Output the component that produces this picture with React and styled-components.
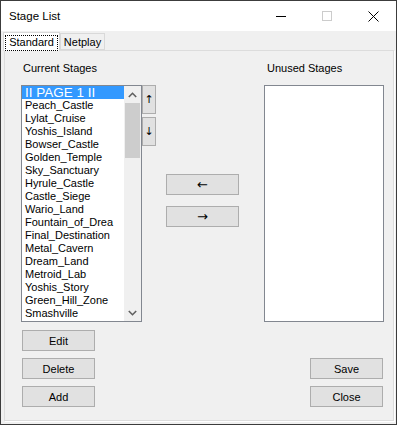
import React from 'react';
import styled, { createGlobalStyle } from 'styled-components';

const Global = createGlobalStyle`
  html, body { margin: 0; padding: 0; background: #ffffff; }
  body { font-family: "Liberation Sans", Arial, sans-serif; }
  * { box-sizing: border-box; }
`;

const Window = styled.div`
  width: 397px;
  height: 425px;
  border: 1px solid #3c3c3c;
  background: #f0f0f0;
  display: flex;
  flex-direction: column;
  overflow: hidden;
`;

const TitleBar = styled.div`
  height: 30px;
  flex: none;
  background: #ffffff;
  display: flex;
  align-items: center;
`;

const Title = styled.div`
  flex: 1;
  padding-left: 8px;
  font-size: 11.5px;
  color: #000;
  line-height: 30px;
`;

const CaptionButton = styled.div`
  width: 46px;
  height: 30px;
  display: flex;
  align-items: center;
  justify-content: center;
`;

const Client = styled.div`
  flex: 1;
  display: flex;
  flex-direction: column;
  padding-left: 2px;
`;

const TabStrip = styled.div`
  height: 19px;
  display: flex;
  align-items: flex-end;
  position: relative;
  z-index: 1;
`;

const Tab = styled.div`
  width: ${p => p.$w}px;
  height: ${p => (p.$active ? 19 : 17)}px;
  margin-bottom: ${p => (p.$active ? -1 : 0)}px;
  border: 1px solid #d9d9d9;
  border-bottom: ${p => (p.$active ? 'none' : '1px solid #d9d9d9')};
  background: ${p => (p.$active ? '#ffffff' : '#f0f0f0')};
  font-size: 11px;
  color: #000;
  display: flex;
  align-items: center;
  justify-content: center;
  padding: ${p => (p.$active ? '1px 1px 0' : '0')};
`;

const FocusLabel = styled.div`
  width: 100%;
  height: 16px;
  border: 1px dotted #000;
  display: flex;
  align-items: center;
  justify-content: center;
  line-height: 13px;
`;

const Panel = styled.div`
  margin-left: 1px;
  width: 390px;
  height: 371px;
  border: 1px solid #dcdcdc;
  box-shadow: 1px 1px 0 #ffffff;
  background: #f0f0f0;
  padding: 11px 0 0 16px;
  display: flex;
  flex-direction: column;
`;

const TopSection = styled.div`
  display: flex;
  align-items: flex-start;
`;

const Group = styled.div`
  display: flex;
  flex-direction: column;
  margin-left: ${p => p.$ml || 0}px;
  margin-top: ${p => p.$mt || 0}px;
  gap: ${p => p.$gap || 0}px;
`;

const Label = styled.div`
  height: 13px;
  line-height: 13px;
  font-size: 11px;
  color: #000;
  padding-left: ${p => p.$indent}px;
  margin-bottom: 10px;
  white-space: nowrap;
`;

const ListRow = styled.div`
  display: flex;
  align-items: flex-start;
`;

const ListBox = styled.div`
  width: ${p => p.$w}px;
  height: 237px;
  border: 1px solid #828790;
  background: #ffffff;
  display: flex;
`;

const Items = styled.div`
  flex: 1;
  min-width: 0;
  display: flex;
  flex-direction: column;
  overflow: hidden;
`;

const Item = styled.div`
  height: 13px;
  line-height: ${p => (p.$selected ? '13px' : '13px')};
  padding-left: 3px;
  font-size: ${p => (p.$selected ? '13.5px' : '11px')};
  white-space: nowrap;
  overflow: hidden;
  color: ${p => (p.$selected ? '#ffffff' : '#000000')};
  background: ${p => (p.$selected ? '#3399ff' : 'transparent')};
`;

const ScrollBar = styled.div`
  width: 17px;
  flex: none;
  background: #f0f0f0;
  display: flex;
  flex-direction: column;
`;

const ScrollArrow = styled.div`
  height: 17px;
  flex: none;
  display: flex;
  align-items: center;
  justify-content: center;
`;

const Track = styled.div`
  flex: 1;
  padding: 0 1px;
`;

const Thumb = styled.div`
  height: 55px;
  background: #cdcdcd;
`;

const Button = styled.div`
  width: ${p => p.$w || 73}px;
  height: ${p => p.$h || 21}px;
  background: #e1e1e1;
  border: 1px solid #adadad;
  display: flex;
  align-items: center;
  justify-content: center;
  font-size: 11px;
  color: #000;
  white-space: nowrap;
  grid-column: ${p => p.$col || 'auto'};
  grid-row: ${p => p.$row || 'auto'};
`;

const ArrowGlyph = styled.span`
  font-family: "DejaVu Sans", "Liberation Sans", sans-serif;
  font-size: ${p => p.$size || 12}px;
  line-height: 1;
  color: #000;
`;

const ButtonGrid = styled.div`
  margin-top: 8px;
  margin-left: 1px;
  display: grid;
  grid-template-columns: 73px 73px;
  column-gap: 215px;
  row-gap: 7px;
`;

const stages = [
  'II PAGE 1 II',
  'Peach_Castle',
  'Lylat_Cruise',
  'Yoshis_Island',
  'Bowser_Castle',
  'Golden_Temple',
  'Sky_Sanctuary',
  'Hyrule_Castle',
  'Castle_Siege',
  'Wario_Land',
  'Fountain_of_Drea',
  'Final_Destination',
  'Metal_Cavern',
  'Dream_Land',
  'Metroid_Lab',
  'Yoshis_Story',
  'Green_Hill_Zone',
  'Smashville',
];

const Chevron = ({ up }) => (
  <svg width="9" height="6" viewBox="0 0 9 6">
    <polyline
      points={up ? '0.8,5 4.5,1.3 8.2,5' : '0.8,1 4.5,4.7 8.2,1'}
      fill="none"
      stroke="#606060"
      strokeWidth="1.6"
    />
  </svg>
);

export default function App() {
  return (
    <>
      <Global />
      <Window>
        <TitleBar>
          <Title>Stage List</Title>
          <CaptionButton>
            <svg width="10" height="10" viewBox="0 0 10 10">
              <line x1="0" y1="5.5" x2="10" y2="5.5" stroke="#000" strokeWidth="1" />
            </svg>
          </CaptionButton>
          <CaptionButton>
            <svg width="10" height="10" viewBox="0 0 10 10">
              <rect x="0.5" y="0.5" width="9" height="9" fill="none" stroke="#cccccc" strokeWidth="1" />
            </svg>
          </CaptionButton>
          <CaptionButton>
            <svg width="11" height="11" viewBox="0 0 11 11">
              <line x1="0.5" y1="0.5" x2="10.5" y2="10.5" stroke="#000" strokeWidth="1" />
              <line x1="10.5" y1="0.5" x2="0.5" y2="10.5" stroke="#000" strokeWidth="1" />
            </svg>
          </CaptionButton>
        </TitleBar>
        <Client>
          <TabStrip>
            <Tab $active $w={57}>
              <FocusLabel>Standard</FocusLabel>
            </Tab>
            <Tab $w={45}>Netplay</Tab>
          </TabStrip>
          <Panel>
            <TopSection>
              <Group>
                <Label $indent={2}>Current Stages</Label>
                <ListRow>
                  <ListBox $w={121}>
                    <Items>
                      {stages.map((s, i) => (
                        <Item key={s} $selected={i === 0}>{s}</Item>
                      ))}
                    </Items>
                    <ScrollBar>
                      <ScrollArrow><Chevron up /></ScrollArrow>
                      <Track><Thumb /></Track>
                      <ScrollArrow><Chevron /></ScrollArrow>
                    </ScrollBar>
                  </ListBox>
                  <Group $gap={3}>
                    <Button $w={14} $h={29}><ArrowGlyph $size={11}>↑</ArrowGlyph></Button>
                    <Button $w={14} $h={29}><ArrowGlyph $size={11}>↓</ArrowGlyph></Button>
                  </Group>
                </ListRow>
              </Group>
              <Group $ml={10} $mt={112} $gap={11}>
                <Button><ArrowGlyph $size={13}>←</ArrowGlyph></Button>
                <Button><ArrowGlyph $size={13}>→</ArrowGlyph></Button>
              </Group>
              <Group $ml={25}>
                <Label $indent={3}>Unused Stages</Label>
                <ListBox $w={120} />
              </Group>
            </TopSection>
            <ButtonGrid>
              <Button $col={1} $row={1}>Edit</Button>
              <Button $col={1} $row={2}>Delete</Button>
              <Button $col={1} $row={3}>Add</Button>
              <Button $col={2} $row={2}>Save</Button>
              <Button $col={2} $row={3}>Close</Button>
            </ButtonGrid>
          </Panel>
        </Client>
      </Window>
    </>
  );
}
